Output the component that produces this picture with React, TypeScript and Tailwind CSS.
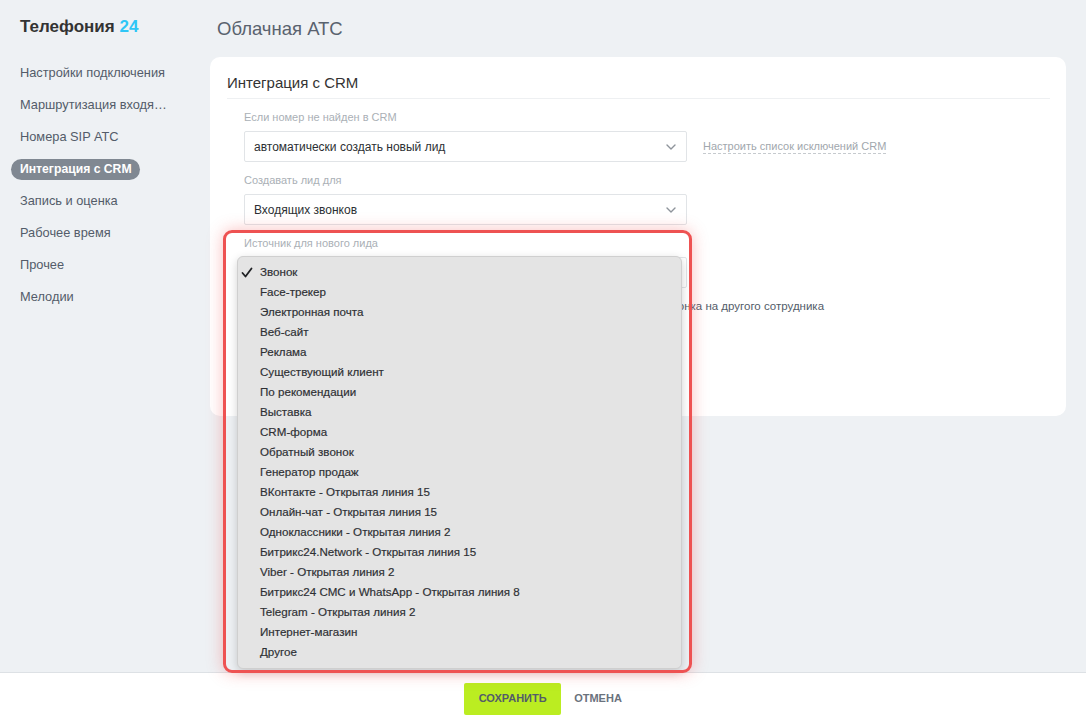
import React from "react";

const menuItems = [
  "Звонок",
  "Face-трекер",
  "Электронная почта",
  "Веб-сайт",
  "Реклама",
  "Существующий клиент",
  "По рекомендации",
  "Выставка",
  "CRM-форма",
  "Обратный звонок",
  "Генератор продаж",
  "ВКонтакте - Открытая линия 15",
  "Онлайн-чат - Открытая линия 15",
  "Одноклассники - Открытая линия 2",
  "Битрикс24.Network - Открытая линия 15",
  "Viber - Открытая линия 2",
  "Битрикс24 СМС и WhatsApp - Открытая линия 8",
  "Telegram - Открытая линия 2",
  "Интернет-магазин",
  "Другое",
];

const navItems = [
  "Настройки подключения",
  "Маршрутизация входящих вызовов",
  "Номера SIP АТС",
  "Интеграция с CRM",
  "Запись и оценка",
  "Рабочее время",
  "Прочее",
  "Мелодии",
];

function Chevron() {
  return (
    <svg width="10" height="6" viewBox="0 0 10 6" fill="none">
      <path d="M1 1l4 4 4-4" stroke="#8e949b" strokeWidth="1.4" strokeLinecap="round" strokeLinejoin="round" />
    </svg>
  );
}

function Select({ value }: { value: string }) {
  return (
    <div className="flex h-[31px] w-[443px] items-center justify-between rounded-[2px] border border-[#e1e4e7] bg-white pl-[9px] pr-[10px]">
      <span className="text-[12px] text-[#2c2f33]">{value}</span>
      <Chevron />
    </div>
  );
}

function Field({ label, value, extra }: { label: string; value: string; extra?: React.ReactNode }) {
  return (
    <div>
      <div className="mb-[7px] h-[14px] text-[11px] leading-[14px] text-[#aab0b6]">{label}</div>
      <div className="flex items-center gap-[16px]">
        <Select value={value} />
        {extra}
      </div>
    </div>
  );
}

export default function App() {
  return (
    <div className="flex h-[724px] flex-col overflow-hidden bg-[#eef1f4] font-['Liberation_Sans',Arial,sans-serif]">
      <div className="flex min-h-0 flex-1">
        <aside className="w-[210px] shrink-0 pl-[20px] pt-[16px]">
          <div className="h-[22px] text-[17px] font-bold leading-[22px] text-[#333]">
            Телефония <span className="text-[#2fc6f6]">24</span>
          </div>
          <nav className="mt-[19px]">
            {navItems.map((item) =>
              item === "Интеграция с CRM" ? (
                <div key={item} className="flex h-[32px] items-center">
                  <span className="-ml-[9px] flex h-[21px] items-center rounded-full bg-[#808892] pl-[9px] pr-[8px] text-[12.2px] font-bold text-white">
                    {item}
                  </span>
                </div>
              ) : (
                <div key={item} className="flex h-[32px] items-center">
                  <span className="max-w-[148px] truncate text-[12.8px] text-[#535c69]">{item}</span>
                </div>
              ),
            )}
          </nav>
        </aside>

        <main className="flex-1 pr-[20px] pt-[17px]">
          <h1 className="h-[24px] pl-[7px] text-[18.5px] leading-[24px] text-[#59626e]">Облачная АТС</h1>

          <section className="relative mt-[16px] h-[359px] rounded-[10px] bg-white pl-[17px] pr-[16px] pt-[16px]">
            <h2 className="h-[26px] border-b border-[#eef0f2] text-[15px] leading-[20px] text-[#333]">Интеграция с CRM</h2>

            <div className="flex flex-col gap-[11px] pl-[17px] pt-[11px]">
              <Field
                label="Если номер не найден в CRM"
                value="автоматически создать новый лид"
                extra={
                  <span className="border-b border-dashed border-[#c6cace] text-[11px] leading-[13px] text-[#a1a7ad]">
                    Настроить список исключений CRM
                  </span>
                }
              />
              <Field label="Создавать лид для" value="Входящих звонков" />
              <Field label="Источник для нового лида" value="" />
            </div>

            <label className="ml-[10px] mt-[10px] flex items-center gap-[8px] text-[11.5px] text-[#535c69]">
              <span className="h-[13px] w-[13px] rounded-[2px] border border-[#c6cdd3] bg-white" />
              Регистрировать в CRM звонок и менять ответственного при переадресации звонка на другого сотрудника
            </label>

            {/* open native dropdown */}
            <div className="absolute left-[27px] top-[199px] z-10 w-[445px] rounded-[6px] border border-[#cfcfcf] bg-[#e4e4e4] pb-[6px] pt-[5px] shadow-[0_3px_10px_rgba(0,0,0,0.18)]">
              {menuItems.map((item, i) => (
                <div
                  key={item}
                  className="flex h-[20px] items-center text-[11.6px] text-[#2e3034] [-webkit-text-stroke:0.18px_#2e3034]"
                >
                  <span className="flex w-[22px] justify-end pr-[7px]">
                    {i === 0 && (
                      <svg width="12" height="11" viewBox="0 0 12 11" fill="none">
                        <path d="M1.5 6l3 3.5L10.5 1.5" stroke="#1f2124" strokeWidth="1.8" strokeLinecap="round" strokeLinejoin="round" />
                      </svg>
                    )}
                  </span>
                  {item}
                </div>
              ))}
            </div>

            {/* red highlight frame */}
            <div className="pointer-events-none absolute left-[13px] top-[173px] z-20 h-[443px] w-[469px] rounded-[9px] border-[3px] border-[#ee5252] shadow-[0_0_16px_rgba(240,70,70,0.35)]" />
          </section>
        </main>
      </div>

      <footer className="flex h-[52px] shrink-0 items-center justify-center gap-[13px] border-t border-[#dde1e5] bg-white">
        <button className="h-[32px] w-[97px] rounded-[2px] bg-[#bbed21] text-[11px] font-bold text-[#535c69]">СОХРАНИТЬ</button>
        <button className="text-[11px] font-bold text-[#6a727d]">ОТМЕНА</button>
      </footer>
    </div>
  );
}
